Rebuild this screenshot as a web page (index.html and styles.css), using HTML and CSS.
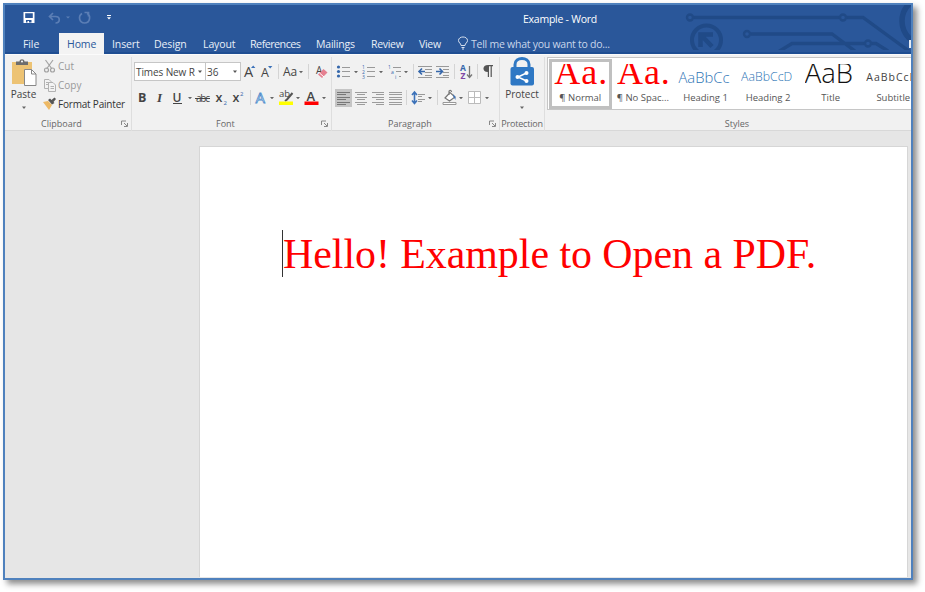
FILE: index.html
```html
<!DOCTYPE html>
<html lang="en">
<head>
<meta charset="utf-8">
<title>Example - Word</title>
<link rel="stylesheet" href="styles.css">
</head>
<body>
<div class="window">
  <header class="titlebar">
    <svg class="circuit" width="231" height="45" viewBox="680 5 231 45" fill="none" stroke="#204a87" stroke-width="3.4">
      <path d="M694 17.500H839M847 17.500H863L909 51M751 34H832L855 51M778 52L792 43.500H864M872 43.500H876L888 51"/>
      <g stroke-width="2.400"><circle cx="690" cy="17.500" r="3"/><circle cx="843" cy="17.500" r="3"/><circle cx="747" cy="34" r="3"/><circle cx="868" cy="43.500" r="3"/></g>
      <circle cx="706.500" cy="40" r="14.500" stroke-width="4"/>
      <path stroke-width="4.500" d="M700.500 47V34.500H713M701 35L712 46.500"/>
      <circle cx="926" cy="21" r="24" stroke-width="5.500"/>
      <path stroke="#e6ebf4" stroke-width="2" d="M910 40V48"/>
    </svg>
    <div class="quick">
      <svg width="110" height="28" viewBox="5 5 110 28" fill="none">
        <path fill="#fff" fill-rule="evenodd" d="M23.500 12H34.500V23H23.500ZM25.200 13.300V18H32.800V13.300ZM26 20V22.500H27.500V21H29V22.500H31.500V20Z"/>
        <g stroke="#5b7eb5" stroke-width="1.700"><path d="M53 13L49.500 16.500L53 20M50 16.500H55.500C60.500 16.500 60.500 23 55.500 23"/><path d="M82 13.500C78 16 79 23 84.500 23C90.500 23 91 15 87 13.500M84.500 12.500H88.500V16.500"/></g>
        <path fill="#5b7eb5" d="M66 16.500H70L68 18.500Z"/>
        <path fill="#fff" d="M107 15H111V16H107ZM107 17.200H111L109 19.400Z"/>
      </svg>
      <span class="doc-name">Example - Word</span>
    </div>
    <nav class="tabs">
      <span class="tab file">File</span><span class="tab home">Home</span><span class="tab insert">Insert</span><span class="tab design">Design</span><span class="tab layout">Layout</span><span class="tab references">References</span><span class="tab mailings">Mailings</span><span class="tab review">Review</span><span class="tab view">View</span>
      <svg width="14" height="20" viewBox="456 34 14 20" fill="none" stroke="#d5dfee"><path d="M461 46.500C461 44 458.500 44 458.500 41.500C458.500 36.800 467.500 36.800 467.500 41.500C467.500 44 465 44 465 46.500ZM461.500 48.500H464.500M462 50H464"/></svg>
      <span class="tell">Tell me what you want to do...</span>
    </nav>
  </header>

  <section class="ribbon">
    <div class="group clipboard">
      <div class="body">
        <div class="big-button">
          <svg width="28" height="31" viewBox="12 57 28 31">
            <path fill="#edc374" d="M14 62H34V84H14Z"/><path fill="#6d6d6d" d="M18 65V61.500H21.500C21.500 58.500 26.500 58.500 26.500 61.500H30V65Z"/><circle cx="24" cy="61.500" r="1" fill="#fff"/>
            <path fill="#fff" stroke="#888" d="M26.500 69.500H33.500L38 74V85.500H26.500Z"/><path fill="none" stroke="#888" d="M33.500 69.500V74H38"/>
          </svg>
          <span class="label">Paste</span>
          <svg width="6" height="4" viewBox="0 0 6 4"><path fill="#666" d="M1 .5H5L3 3Z"/></svg>
        </div>
        <div class="commands">
          <div class="command disabled"><svg width="14" height="16" viewBox="43 58 14 16" fill="none" stroke="#a3a3a3" stroke-width="1.200"><path d="M45.500 60L52 69M53 60L46.500 69"/><circle cx="46.500" cy="70" r="2"/><circle cx="52.500" cy="70" r="2"/></svg><span class="cut">Cut</span></div>
          <div class="command disabled"><svg width="14" height="16" viewBox="43 77 14 16" fill="#f3f3f3" stroke="#b2b2b2"><path d="M44.500 79.500H49L51.500 82V88.500H44.500ZM46 82.500H49M46 84.500H49"/><path d="M48.500 82.500H53L55.500 85V91.500H48.500ZM50.500 86.500H54M50.500 88.500H54"/></svg><span class="copy">Copy</span></div>
          <div class="command"><svg width="14" height="16" viewBox="43 96 14 16"><path fill="#edb965" d="M43 102L48 101L52 105L49 110Z"/><path fill="#555" d="M48 100L50 98.500L54.500 103L52 104.500ZM51.500 100L54.500 97.500L56 99L53.500 102Z"/></svg><span class="painter">Format Painter</span></div>
        </div>
      </div>
      <footer><span>Clipboard</span><svg class="launcher" width="8" height="8" viewBox="0 0 8 8" fill="none" stroke="#888"><path d="M.5 5V1H5M3 3L6 6M6.500 3V6.500H3"/></svg></footer>
    </div>

    <div class="group font">
      <div class="row first">
        <div class="combo family"><span>Times New R</span><svg width="6" height="4" viewBox="0 0 6 4"><path fill="#555" d="M1 .5H5L3 3Z"/></svg></div>
        <div class="combo size"><span>36</span><svg width="6" height="4" viewBox="0 0 6 4"><path fill="#555" d="M1 .5H5L3 3Z"/></svg></div>
        <svg width="90" height="20" viewBox="241 62 90 20">
          <g class="glyph"><text x="244" y="77" font-size="14.500">A</text><text x="261" y="77" font-size="12.500">A</text><text x="283" y="76" font-size="12">Aa</text></g>
          <path fill="#3c72b9" d="M251 68L253.200 65.500L255.400 68ZM268 66H272.400L270.200 68.500Z"/>
          <path fill="#666" d="M299 71H303L301 73.200Z"/>
          <path stroke="#d4d4d4" d="M278.500 64V79M308.500 64V79"/>
          <text class="glyph" x="316" y="74" font-size="10">A</text><path fill="#e58090" d="M318 74.500L323.500 69L327.500 72.500L322 78Z"/><path stroke="#fff" d="M319.500 73L324 77"/>
        </svg>
      </div>
      <div class="row second">
        <svg width="197" height="22" viewBox="134 88 197 22">
          <g class="glyph"><text x="138" y="102" font-size="12.500" font-weight="700">B</text><text class="italic" x="157" y="102" font-size="13">I</text><text x="172.500" y="101.500" font-size="12" font-weight="600">U</text><text x="196" y="102" font-size="10" textLength="14">abc</text><text x="215.500" y="102" font-size="12.500" font-weight="600">x</text><text x="232.500" y="102" font-size="12.500" font-weight="600">x</text></g>
          <path stroke="#444" d="M173 103.500H182M195 98.500H210"/>
          <g class="mark"><text x="223.500" y="105" font-size="6">2</text><text x="240" y="96" font-size="6">2</text></g>
          <path stroke="#d4d4d4" d="M250.500 90V105"/>
          <text class="effect" x="255.500" y="102.500" font-size="15">A</text>
          <text class="glyph" x="279" y="97" font-size="9.500">ab</text><path stroke="#555" stroke-width="2" d="M292.500 93L287 99.500L285 101"/>
          <path fill="#ff0" d="M279 101.500H293V105H279Z"/>
          <text class="glyph" x="306.500" y="101" font-size="13" font-weight="600">A</text><path fill="#f00" d="M304.500 101.500H318.500V105H304.500Z"/>
          <path fill="#666" d="M188 97H192L190 99.200ZM270 97H274L272 99.200ZM296 97H300L298 99.200ZM322 97H326L324 99.200Z"/>
        </svg>
      </div>
      <footer><span>Font</span><svg class="launcher" width="8" height="8" viewBox="0 0 8 8" fill="none" stroke="#888"><path d="M.5 5V1H5M3 3L6 6M6.500 3V6.500H3"/></svg></footer>
    </div>

    <div class="group paragraph">
      <div class="row first">
        <svg width="165" height="20" viewBox="334 62 165 20" fill="none">
          <g fill="#3567ab"><circle cx="338.500" cy="67" r="1.600"/><circle cx="338.500" cy="71.500" r="1.600"/><circle cx="338.500" cy="76" r="1.600"/></g>
          <path stroke="#999" d="M342 67.500H350M342 71.500H350M342 76.500H350M367 67.500H375M367 71.500H375M367 76.500H375M393 67.500H401M396 71.500H401M399 76.500H401"/>
          <g class="mark" font-size="5"><text x="362" y="69">1</text><text x="362" y="74">2</text><text x="362" y="79">3</text><text x="388" y="69">1</text><text x="391" y="74">a</text><text x="395" y="79">i</text></g>
          <path fill="#666" d="M354 71H358L356 73.200ZM379 71H383L381 73.200ZM404 71H408L406 73.200Z"/>
          <path stroke="#d4d4d4" d="M413.500 64V79M454.500 64V79M477.500 64V79"/>
          <path stroke="#999" d="M418 66.500H432M425 69.500H432M425 72.500H432M418 77.500H432M425 75.500H432M436 66.500H449M443 69.500H449M443 72.500H449M436 77.500H449M443 75.500H449"/>
          <path stroke="#3567ab" stroke-width="1.600" d="M425 71.500H419M422 68.500L419 71.500L422 74.500M436 71.500H442M439.500 68.500L442.500 71.500L439.500 74.500"/>
          <g font-size="8.500" font-weight="700"><text fill="#3567ab" x="460" y="71">A</text><text fill="#8047a5" x="460.500" y="79">Z</text></g>
          <path stroke="#777" stroke-width="1.300" d="M469.500 66V77M467 74.500L469.500 77.500L472 74.500"/>
          <path fill="#555" d="M488 65H493V66.300H491.800V77H490.600V66.300H489V77H487.800V72C482 72 482 65 488 65Z"/>
        </svg>
      </div>
      <div class="row second">
        <svg width="165" height="22" viewBox="334 88 165 22" fill="none">
          <path fill="#c5c5c5" d="M335 89H352V107H335Z"/>
          <path stroke="#777" d="M337 92.500H350M337 94.500H346M337 97.500H350M337 99.500H346M337 102.500H350M337 104.500H346"/>
          <path stroke="#9c9c9c" d="M355 92.500H367M357 94.500H365M355 97.500H367M357 99.500H365M355 102.500H367M357 104.500H365M372 92.500H384M376 94.500H384M372 97.500H384M376 99.500H384M372 102.500H384M376 104.500H384M389 92.500H402M389 94.500H402M389 97.500H402M389 99.500H402M389 102.500H402M389 104.500H402"/>
          <path stroke="#d4d4d4" d="M406.500 90V105M437.500 90V105"/>
          <path stroke="#3c72b9" stroke-width="1.600" d="M414.500 92V103M412 95L414.500 92L417 95M412 100.500L414.500 103.500L417 100.500"/>
          <path stroke="#999" d="M418 94.500H425M418 96.500H422M418 99.500H425M418 101.500H422"/>
          <path fill="#fff" stroke="#777" stroke-width="1.200" d="M445 98L450 92.500L455 97L449.500 101ZM449 95V91.500C449 90 451.500 90 451.500 92"/><path fill="#3c72b9" d="M453 94L455.500 97V100L453.500 97Z"/><path fill="#fff" stroke="#999" d="M443 102.500H456V104.500H443Z"/>
          <path fill="#fff" stroke="#bbb" d="M468.500 91.500H480.500V103.500H468.500ZM474.500 91.500V103.500M468.500 97.500H480.500"/>
          <path fill="#666" d="M428 97H432L430 99.200ZM459 97H463L461 99.200ZM485 97H489L487 99.200Z"/>
        </svg>
      </div>
      <footer><span>Paragraph</span><svg class="launcher" width="8" height="8" viewBox="0 0 8 8" fill="none" stroke="#888"><path d="M.5 5V1H5M3 3L6 6M6.500 3V6.500H3"/></svg></footer>
    </div>

    <div class="group protection">
      <div class="big-button">
        <svg width="26" height="31" viewBox="509 57 26 31">
          <path fill="none" stroke="#2f78c4" stroke-width="3" d="M515 69V64.500C515 56.500 529 56.500 529 64.500V69"/>
          <rect x="510.500" y="67" width="23.500" height="18.500" rx="2" fill="#2f78c4"/>
          <path fill="none" stroke="#fff" stroke-width="1.500" d="M526.500 73L518 77L526.500 81"/><g fill="#fff"><circle cx="526.500" cy="73" r="2"/><circle cx="517.500" cy="77" r="2"/><circle cx="526.500" cy="81" r="2"/></g>
        </svg>
        <span class="label">Protect</span>
        <svg width="6" height="4" viewBox="0 0 6 4"><path fill="#666" d="M1 .5H5L3 3Z"/></svg>
      </div>
      <footer><span>Protection</span></footer>
    </div>

    <div class="group styles">
      <div class="gallery">
        <div class="style selected"><span class="preview serif">Aa.</span><span class="name">¶ Normal</span></div>
        <div class="style"><span class="preview serif">Aa.</span><span class="name">¶ No Spac...</span></div>
        <div class="style"><span class="preview h1">AaBbCc</span><span class="name">Heading 1</span></div>
        <div class="style"><span class="preview h2">AaBbCcD</span><span class="name">Heading 2</span></div>
        <div class="style"><span class="preview title">AaB</span><span class="name">Title</span></div>
        <div class="style"><span class="preview subtitle">AaBbCcD</span><span class="name">Subtitle</span></div>
      </div>
      <footer><span>Styles</span></footer>
    </div>
  </section>

  <main class="workspace">
    <article class="page"><p><span class="cursor"></span>Hello! Example to Open a PDF.</p></article>
  </main>
</div>
</body>
</html>
```

FILE: styles.css
```css
* { box-sizing: border-box; }
body {
  margin: 0;
  padding: 3px;
  height: 592px;
  overflow: hidden;
  background: #fff;
  font-family: "Open Sans", "Noto Sans", sans-serif;
  color: #444;
}
svg { display: block; flex: none; }
span { white-space: nowrap; }
.window {
  width: 910px;
  height: 577px;
  border: 2px solid #4f81bd;
  box-shadow: 4px 4px 6px rgba(0, 0, 0, .45);
  background: #e6e6e6;
  display: flex;
  flex-direction: column;
  overflow: hidden;
}

.titlebar {
  position: relative;
  flex: none;
  height: 49px;
  background: #2a579a;
  border-bottom: 2px solid #1f4e92;
  color: #e9eff8;
}
.circuit { position: absolute; top: 0; right: 0; }
.quick { display: flex; height: 28px; align-items: center; }
.doc-name { margin-left: 408px; font-size: 10.5px; letter-spacing: -.25px; color: #fff; }
.tabs { display: flex; height: 21px; font-size: 10.5px; line-height: 22px; letter-spacing: -.1px; }
.tab { flex: none; height: 21px; }
.file { width: 54px; padding-left: 18px; }
.home { width: 45px; padding-left: 8px; background: #f3f3f3; color: #2a579a; }
.insert { width: 50px; padding-left: 8px; }
.design { width: 49px; }
.layout { width: 47px; }
.references { width: 66px; letter-spacing: -.4px; }
.references { letter-spacing: -.55px; font-size: 10.8px; }
.mailings { width: 55px; letter-spacing: -.2px; }
.review { width: 48px; letter-spacing: -.3px; }
.view { width: 37px; letter-spacing: -.3px; }
.tell { margin-left: 1px; color: #c9d6ea; letter-spacing: -.25px; }

.ribbon {
  flex: none;
  display: flex;
  height: 77px;
  padding-top: 2px;
  background: #f1f1f1;
  border-top: 1px solid #fbfbfb;
  border-bottom: 1px solid #d8d8d8;
}
.group {
  flex: none;
  display: flex;
  flex-direction: column;
  border-right: 1px solid #dedede;
  height: 74px;
}
.clipboard { width: 127px; }
.font { width: 200px; padding-left: 2px; }
.paragraph { width: 168px; padding-left: 2px; }
.protection { width: 45px; }
.styles { width: 366px; padding-left: 2px; border-right: 0; }
.group footer {
  margin-top: auto;
  height: 14px;
  display: flex;
  align-items: center;
  justify-content: center;
  font-size: 9px;
  line-height: 14px;
  color: #666;
}
.clipboard footer { justify-content: flex-start; padding-left: 36px; }
.font footer { justify-content: flex-start; padding-left: 82px; }
.paragraph footer { justify-content: flex-start; padding-left: 54px; }
.protection footer { letter-spacing: -.2px; }
.styles footer { padding-left: 16px; }
.launcher { margin-left: auto; margin-right: 2px; }
.body { display: flex; }
.big-button { display: flex; flex-direction: column; align-items: center; width: 37px; }
.big-button .label { font-size: 10px; line-height: 12px; margin-bottom: 6px; }
.protection .big-button { width: 44px; }
.commands { padding-left: 1px; display: flex; flex-direction: column; }
.command { display: flex; align-items: center; height: 19px; margin-top: -1px; margin-bottom: 1px; font-size: 10px; color: #333; }
.command span { margin-left: 1px; }
.painter { letter-spacing: -.2px; }
.disabled { color: #999; }

.row { display: flex; }
.first { height: 26px; padding-top: 5px; }
.second { height: 26px; padding-top: 5px; }
.combo {
  display: flex;
  align-items: center;
  justify-content: space-between;
  height: 19px;
  border: 1px solid #c6c6c6;
  background: #fff;
  padding: 0 2px 0 1px;
  font-size: 10px;
}
.family { width: 72px; letter-spacing: -.1px; }
.size { width: 35px; border-left: 0; }
.glyph { fill: #444; }
.mark { fill: #3567ab; }
.italic { font-family: "Liberation Serif", serif; font-style: italic; font-weight: 700; }
.effect { fill: #fff; stroke: #4c8bcb; stroke-width: .8; }

.gallery {
  display: flex;
  width: 364px;
  height: 53px;
  overflow: hidden;
  padding: 1px 0 1px 1px;
  background: #fff;
  border: 1px solid #c6c6c6;
  border-right: 0;
}
.style {
  flex: none;
  width: 62.6px;
  height: 50px;
  padding-top: 5px;
  display: flex;
  flex-direction: column;
  align-items: center;
}
.selected { border: 3px solid #c0c0c0; padding-top: 2px; }
.preview { width: 54px; height: 24px; overflow: hidden; line-height: 26px; flex: none; }
.serif { width: 52px; font-family: "Liberation Serif", serif; font-size: 36px; color: #f00; line-height: 17px; letter-spacing: 1px; }
.h1 { font-size: 14.8px; font-weight: 300; color: #2e74b5; }
.h2 { font-size: 12.3px; color: #2e74b5; font-weight: 300; }
.title { width: 52px; font-size: 27.5px; font-weight: 300; color: #111; line-height: 17px; }
.subtitle { font-size: 10.5px; letter-spacing: 1px; }
.name { font-size: 9.5px; line-height: 20px; height: 20px; color: #555; }

.workspace { flex: 1; display: flex; padding: 15px 3px 1px 194px; }
.page { flex: 1; background: #fff; border: 1px solid #d6d6d6; border-bottom: 0; padding: 83px 0 0 83px; }
.page p {
  position: relative;
  margin: 0;
  font-family: "Liberation Serif", "Times New Roman", serif;
  font-size: 41.9px;
  line-height: 48px;
  letter-spacing: -.03px;
  white-space: nowrap;
  color: #f00;
}
.cursor { position: absolute; left: -1px; top: 0; width: 1px; height: 47px; background: #333; }
```
